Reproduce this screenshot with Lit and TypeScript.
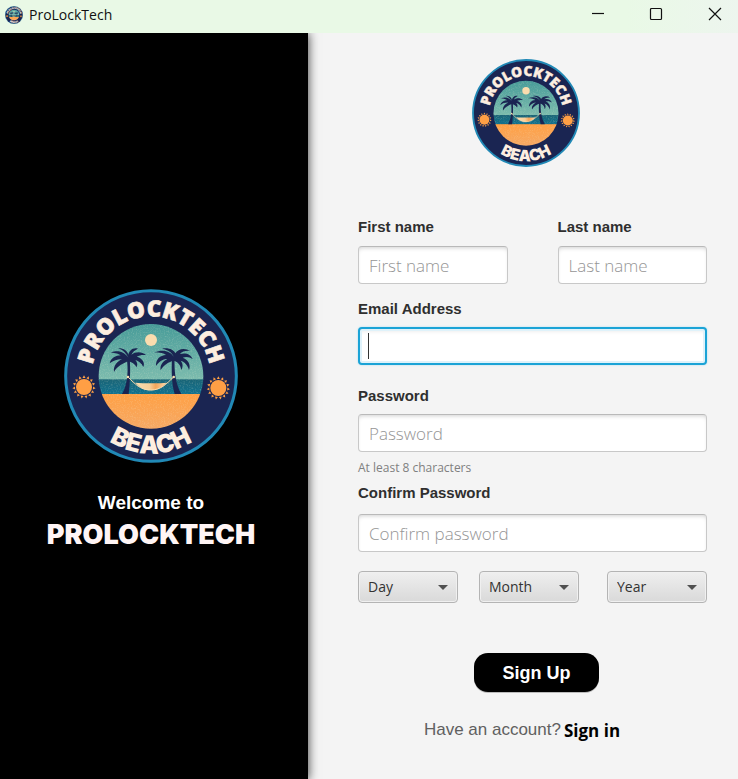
import { LitElement, html, css, svg } from "lit";
import { customElement } from "lit/decorators.js";

const RAYS = Array.from({ length: 15 }, (_, i) => i * 24);

@customElement("beach-logo")
class BeachLogo extends LitElement {
  static styles = css`
    :host { display: block; }
    svg { display: block; width: 100%; height: 100%; }
    .word {
      font-family: "Open Sans", sans-serif;
      font-weight: 800;
      fill: #fdeee0;
      stroke: #fdeee0;
      stroke-width: 2;
      text-anchor: middle;
    }
    .top { font-size: 67px; }
    .bottom { font: 900 75px Inter, sans-serif; stroke: none; }
    .navy { fill: #1a2552; }
    .sun { fill: #ff9f45; }
  `;

  sun(x: number, y: number) {
    return svg`<g class="sun" transform="translate(${x} ${y})">
      <circle r="24"/>
      ${RAYS.map((a) => svg`<path d="M-4.5 -27 L4.5 -27 L0 -35Z" transform="rotate(${a})"/>`)}
    </g>`;
  }

  render() {
    return html`<svg viewBox="12 11 522 522" role="img" aria-label="ProLockTech Beach logo">
      <defs>
        <clipPath id="scene"><circle cx="273" cy="273" r="157"/></clipPath>
        <linearGradient id="sky" x1="0" y1="0" x2="0" y2="1">
          <stop offset="0" stop-color="#459a98"/><stop offset="1" stop-color="#7cbcae"/>
        </linearGradient>
        <linearGradient id="sea" x1="0" y1="0" x2="0" y2="1">
          <stop offset="0" stop-color="#1a6577"/><stop offset="1" stop-color="#10718f"/>
        </linearGradient>
        <linearGradient id="sand" x1="0" y1="0" x2="0" y2="1">
          <stop offset="0" stop-color="#ffa044"/><stop offset="1" stop-color="#f5a966"/>
        </linearGradient>
        <linearGradient id="net" x1="0" y1="0" x2="1" y2="0">
          <stop offset="0" stop-color="#fbdcb0"/><stop offset="0.45" stop-color="#f8d09a"/>
          <stop offset="0.65" stop-color="#f5a55a"/><stop offset="1" stop-color="#fbdcb0"/>
        </linearGradient>
        <filter id="grain" x="0" y="0" width="1" height="1">
          <feTurbulence type="fractalNoise" baseFrequency="0.25" numOctaves="2" seed="4"/>
          <feColorMatrix values="0 0 0 0 0.95  0 0 0 0 0.9  0 0 0 0 0.7  2.4 0 0 0 -1.1"/>
        </filter>
        <path id="arcTop" d="M96 290 A178 178 0 1 1 450 290"/>
        <path id="arcBottom" d="M41 273 A232 232 0 0 0 505 273"/>
      </defs>
      <circle cx="273" cy="272" r="256" fill="#1a2552" stroke="#2189b6" stroke-width="9"/>
      <g clip-path="url(#scene)">
        <rect x="110" y="110" width="326" height="174" fill="url(#sky)"/>
        <rect x="110" y="282" width="326" height="46" fill="url(#sea)"/>
        <rect x="110" y="326" width="326" height="110" fill="url(#sand)"/>
        <rect x="110" y="110" width="326" height="326" filter="url(#grain)" opacity="0.2"/>
        <circle cx="273" cy="164" r="18" fill="#fadcae"/>
        <g class="navy">
          <path d="M200 218 C205 250 205 295 186 326 L206 326 C210 295 212 250 209 218Z"/>
          <path d="M336 218 C334 255 335 295 344 326 L364 326 C346 295 342 255 344 218Z"/>
          <path d="M205 217 C194 200 174 192 152 202 C168 202 174 205 182 210 C168 210 152 218 149 234 C162 224 176 221 186 222 C172 228 159 242 162 260 C172 242 190 234 204 228 C216 230 224 236 230 246 C234 236 231 230 226 224 C236 227 245 234 250 245 C257 230 244 217 230 214 C238 209 248 208 258 209 C246 198 226 198 214 208 C218 200 224 194 234 190 C218 186 208 196 205 208 C202 196 190 188 174 189 C190 194 198 204 205 217Z"/>
          <path d="M341 214 C332 198 310 190 283 201 C300 201 312 204 318 209 C300 210 287 222 288 242 C298 226 312 221 322 221 C308 228 299 240 302 255 C310 239 328 229 340 226 C352 228 362 238 364 254 C371 240 367 232 362 226 C374 230 384 240 387 255 C394 236 382 222 368 217 C380 213 390 216 398 222 C393 206 376 201 360 206 C366 199 378 195 391 197 C374 186 354 190 346 204 C342 194 326 186 306 190 C326 194 336 202 341 214Z"/>
        </g>
        <path d="M226 292 C250 294 300 294 320 292 C306 308 290 315 272 315 C254 315 240 308 226 292Z" fill="url(#net)"/>
        <path d="M204 275 C226 296 240 314 272 314 C304 314 318 296 341 275" fill="none" stroke="#fadcae" stroke-width="3"/>
        <circle cx="204" cy="275" r="4" fill="#fadcae"/><circle cx="341" cy="275" r="4" fill="#fadcae"/>
      </g>
      ${this.sun(72, 305)} ${this.sun(475, 308)}
      <text class="word top"><textPath href="#arcTop" startOffset="50%">PROLOCKTECH</textPath></text>
      <text class="word bottom"><textPath href="#arcBottom" startOffset="50%">BEACH</textPath></text>
    </svg>`;
  }
}

@customElement("app-root")
class AppRoot extends LitElement {
  static styles = css`
    :host {
      display: flex;
      flex-direction: column;
      min-height: 100vh;
      background: #f4f4f4;
      color: #2f2f2f;
      font-family: "Liberation Sans", Arial, sans-serif;
    }
    * { box-sizing: border-box; }
    .titlebar {
      position: relative;
      z-index: 1;
      display: flex;
      align-items: center;
      height: 33px;
      padding-left: 5px;
      background: linear-gradient(90deg, #e9f9e6 85%, #edf5ee);
      color: #111;
      font: 14px/20px "Open Sans", sans-serif;
    }
    .appicon { width: 18px; height: 18px; margin: 0 6px 4px 0; }
    .title { flex: 1; margin-bottom: 4px; }
    .win {
      display: grid;
      place-items: center;
      width: 58px;
      height: 28px;
      margin-bottom: 5px;
      padding: 0;
      border: 0;
      background: none;
    }
    .win:last-child { width: 53px; padding-left: 6px; }
    .win svg { width: 14px; height: 14px; fill: none; stroke: #111; stroke-width: 1.2; }
    .body { flex: 1; display: flex; }
    .brand {
      flex: 0 0 308px;
      display: flex;
      flex-direction: column;
      align-items: center;
      justify-content: center;
      padding: 26px 6px 0 0;
      background: #000;
      color: #fff;
      box-shadow: 0 0 10px rgba(0, 0, 0, 0.8);
    }
    .brandlogo { width: 174px; height: 174px; }
    .welcome { margin: 28px 0 0; font-size: 19px; line-height: 24px; font-weight: 700; }
    .name {
      margin: 4px 0 0;
      color: #fff5f5;
      font: 900 27px/32px Inter, sans-serif;
    }
    .panel { flex: 1; display: flex; flex-direction: column; padding: 26px 31px 36px 50px; }
    .head { display: flex; justify-content: center; padding-right: 13px; margin-bottom: 51px; }
    .headlogo { width: 108px; height: 108px; }
    .field { display: flex; flex-direction: column; gap: 10px; }
    .names { display: grid; grid-template-columns: 1fr 1fr; gap: 50px; }
    .email { margin-top: 16px; gap: 9px; }
    .password { margin-top: 22px; gap: 9px; }
    .confirm { margin-top: 7px; gap: 12px; }
    label { font-size: 15px; line-height: 18px; font-weight: 700; }
    input {
      width: 100%;
      height: 38px;
      padding: 0 10px;
      border: 1px solid #c8c8c8;
      border-top-color: #b9b9b9;
      border-radius: 4px;
      outline: 0;
      background: #fff;
      box-shadow: inset 0 3px 4px -2px rgba(0, 0, 0, 0.18);
      color: #333;
      font: 300 17px/26px "Open Sans", sans-serif;
    }
    input::placeholder { color: #959595; opacity: 1; }
    input.active {
      border: 2px solid #1ba3d6;
      background: linear-gradient(#333, #333) 8px center / 1px 26px no-repeat #fff;
      box-shadow: 0 0 2px #9fd8ee, inset 0 0 0 2px #dff2fa, inset 0 4px 4px -2px rgba(0, 0, 0, 0.1);
    }
    .hint {
      margin: 7px 0 0;
      color: #808080;
      font: 12px/18px "Open Sans", sans-serif;
    }
    .dates { display: flex; gap: 21px; margin-top: 19px; }
    .pick { position: relative; display: flex; }
    .pick:last-child { margin-left: auto; }
    .pick::after {
      content: "";
      position: absolute;
      right: 10px;
      top: 14px;
      border: 5px solid transparent;
      border-top-color: #505050;
      border-bottom: 0;
      pointer-events: none;
    }
    select {
      appearance: none;
      width: 100px;
      height: 32px;
      padding: 0 9px;
      border: 1px solid #b4b4b4;
      border-radius: 4px;
      background: linear-gradient(#efefef, #d9d9d9);
      box-shadow: inset 0 0 0 1px #f0f0f0;
      color: #333;
      font: 14px/20px "Open Sans", sans-serif;
    }
    .actions { display: flex; justify-content: center; padding-left: 8px; margin-top: 50px; }
    .signup {
      width: 125px;
      height: 39px;
      border: 0;
      border-radius: 14px;
      background: #000;
      box-shadow: 0 1px 0 #bbb;
      color: #fff;
      font: 700 18px/24px "Liberation Sans", Arial, sans-serif;
    }
    .foot {
      display: flex;
      justify-content: center;
      gap: 3px;
      margin: 26px 0 0;
      padding-right: 21px;
      color: #606060;
      font-size: 17px;
      line-height: 24px;
    }
    .foot a {
      color: #000;
      font: 700 17px/26px "Open Sans", sans-serif;
      text-decoration: none;
    }
  `;

  picker(name: string) {
    return html`<div class="pick">
      <select aria-label=${name}><option>${name}</option></select>
    </div>`;
  }

  render() {
    return html`
      <header class="titlebar">
        <beach-logo class="appicon"></beach-logo>
        <span class="title">ProLockTech</span>
        <button class="win" aria-label="Minimize"><svg viewBox="0 0 14 14"><path d="M1 6.5H13"/></svg></button>
        <button class="win" aria-label="Maximize"><svg viewBox="0 0 14 14"><rect x="1.5" y="1.5" width="11" height="11" rx="1"/></svg></button>
        <button class="win" aria-label="Close"><svg viewBox="0 0 14 14"><path d="M1 1L13 13M13 1L1 13"/></svg></button>
      </header>
      <div class="body">
        <aside class="brand">
          <beach-logo class="brandlogo"></beach-logo>
          <p class="welcome">Welcome to</p>
          <h1 class="name">PROLOCKTECH</h1>
        </aside>
        <form class="panel">
          <div class="head"><beach-logo class="headlogo"></beach-logo></div>
          <div class="names">
            <div class="field"><label for="first">First name</label><input id="first" placeholder="First name"></div>
            <div class="field"><label for="last">Last name</label><input id="last" placeholder="Last name"></div>
          </div>
          <div class="field email"><label for="email">Email Address</label><input id="email" class="active" type="email"></div>
          <div class="field password"><label for="pw">Password</label><input id="pw" type="password" placeholder="Password"></div>
          <p class="hint">At least 8 characters</p>
          <div class="field confirm"><label for="pw2">Confirm Password</label><input id="pw2" type="password" placeholder="Confirm password"></div>
          <div class="dates">${["Day", "Month", "Year"].map((n) => this.picker(n))}</div>
          <div class="actions"><button class="signup" type="button">Sign Up</button></div>
          <p class="foot"><span>Have an account?</span><a href="#signin">Sign in</a></p>
        </form>
      </div>
    `;
  }
}
